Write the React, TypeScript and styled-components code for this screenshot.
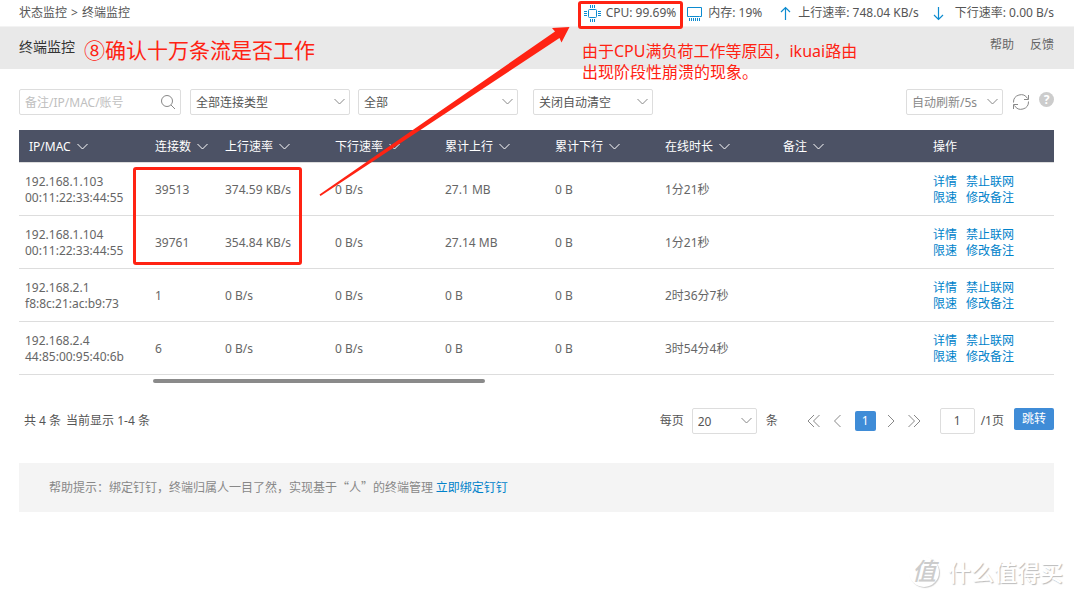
import React from 'react';
import styled, { createGlobalStyle } from 'styled-components';

const GlobalStyle = createGlobalStyle`
  *, *::before, *::after { box-sizing: border-box; }
  body {
    margin: 0;
    background: #fff;
    color: #555;
    font: 12px/16px "Noto Sans", "Noto Sans CJK SC", sans-serif;
  }
  button, input, select { font: inherit; color: inherit; margin: 0; }
`;

const Page = styled.div`
  position: relative;
  min-height: 100vh;
  overflow: hidden;
`;

const TopBar = styled.header`
  display: flex;
  justify-content: space-between;
  align-items: center;
  height: 26px;
  padding: 0 20px 0 19px;
`;

const Crumbs = styled.nav`
  display: flex;
  gap: 4px;
  a { color: inherit; text-decoration: none; }
`;

const Stats = styled.div`
  display: flex;
  gap: 11px;
`;

const Stat = styled.span`
  display: flex;
  align-items: center;
  gap: 5px;
  white-space: nowrap;
`;

const TitleBar = styled.div`
  display: flex;
  justify-content: space-between;
  height: 43px;
  padding: 10px 20px 0 19px;
  background: #e9e9e9;
  border-top: 1px solid #f3f3f3;
`;

const Title = styled.h1`
  margin: 0;
  font-size: 14px;
  line-height: 20px;
  font-weight: 400;
  color: #333;
`;

const TitleLinks = styled.nav`
  display: flex;
  gap: 16px;
  a { color: #666; text-decoration: none; }
`;

const Content = styled.main`
  padding: 20px 20px 0 19px;
`;

const Toolbar = styled.div`
  display: flex;
  align-items: center;
  margin-bottom: 15px;
`;

const Spacer = styled.div`
  flex: 1;
`;

const Field = styled.div<{ $w: number; $gap?: number }>`
  position: relative;
  width: ${p => p.$w}px;
  height: 26px;
  margin-right: ${p => p.$gap ?? 0}px;
  color: #555;
  svg { position: absolute; right: 4px; top: 8px; pointer-events: none; }
`;

const Search = styled(Field)`
  svg { right: 5px; top: 5px; }
`;

const SearchInput = styled.input`
  width: 100%;
  height: 26px;
  padding: 0 26px 0 5px;
  border: 1px solid #ddd;
  border-radius: 2px;
  outline: none;
  &::placeholder { color: #c0c0c0; }
`;

const SelectBox = styled.select<{ $muted?: boolean }>`
  appearance: none;
  width: 100%;
  height: 26px;
  padding: 2px 20px 0 5px;
  border: 1px solid #ddd;
  border-radius: 2px;
  background: #fff;
  color: ${p => (p.$muted ? '#888' : '#555')};
`;

const IconButton = styled.button`
  display: flex;
  padding: 0;
  border: 0;
  background: none;
  color: #888;
  cursor: pointer;
`;

const HelpButton = styled(IconButton)`
  justify-content: center;
  align-self: flex-start;
  width: 15px;
  height: 15px;
  margin: 3px 0 0 9px;
  border-radius: 8px;
  background: #ccc;
  color: #fff;
  font-weight: 700;
  line-height: 15px;
`;

const Table = styled.table`
  width: 100%;
  table-layout: fixed;
  border-collapse: collapse;
`;

const HeadCell = styled.th`
  height: 32px;
  padding: 2px 0 0 10px;
  background: #4c5265;
  border-bottom: 1px solid #ddd;
  color: #fff;
  font-weight: 400;
  text-align: left;
  white-space: nowrap;
  svg { margin-left: 5px; }
`;

const Cell = styled.td`
  height: 53px;
  padding: 2px 0 0 10px;
  border-bottom: 1px solid #ddd;
  color: #666;
  white-space: nowrap;
  &:first-child { padding-left: 6px; }
`;

const Actions = styled.div`
  display: grid;
  grid-template-columns: max-content max-content;
  column-gap: 9px;
`;

const Link = styled.a`
  color: #0082ca;
  text-decoration: none;
`;

const ScrollTrack = styled.div`
  padding: 4px 0 0 134px;
`;

const ScrollThumb = styled.div`
  width: 332px;
  height: 4px;
  border-radius: 2px;
  background: #8a8a8a;
`;

const Footer = styled.div`
  display: flex;
  align-items: center;
  margin: 25px 0 29px;
  padding-left: 5px;
`;

const Summary = styled.p`
  display: flex;
  gap: 5px;
  margin: 0;
`;

const Pager = styled.nav`
  display: flex;
  align-items: center;
  margin: 0 19px 0 29px;
  gap: 11px;
`;

const CurrentPage = styled.button`
  width: 21px;
  height: 20px;
  padding: 0;
  border: 0;
  border-radius: 2px;
  background: #3f8cd7;
  color: #fff;
`;

const PageInput = styled.input`
  width: 35px;
  height: 26px;
  margin-right: 6px;
  padding: 0;
  border: 1px solid #ddd;
  border-radius: 2px;
  text-align: center;
`;

const JumpButton = styled.button`
  align-self: flex-start;
  width: 40px;
  height: 22px;
  margin-left: 10px;
  padding: 0;
  border: 0;
  border-radius: 2px;
  background: #3f8cd7;
  color: #fff;
`;

const Label = styled.label`
  margin-right: 8px;
`;

const Tip = styled.p`
  margin: 0;
  padding: 16px 30px 17px;
  background: #f4f4f4;
  color: #888;
  font-family: "Noto Sans CJK SC", sans-serif;
`;

const Marks = styled.div`
  position: absolute;
  inset: 0;
  pointer-events: none;
  color: #ff2313;
`;

const MarkBox = styled.div<{ $x: number; $y: number; $w: number; $h: number }>`
  position: absolute;
  left: ${p => p.$x}px;
  top: ${p => p.$y}px;
  width: ${p => p.$w}px;
  height: ${p => p.$h}px;
  border: 3px solid #ff2313;
  border-radius: 3px;
`;

const MarkText = styled.p<{ $x: number; $y: number; $size: number; $line: number }>`
  position: absolute;
  left: ${p => p.$x}px;
  top: ${p => p.$y}px;
  margin: 0;
  font-size: ${p => p.$size}px;
  line-height: ${p => p.$line}px;
  white-space: nowrap;
`;

const Arrow = styled.svg`
  position: absolute;
  left: 0;
  top: 0;
`;

const Watermark = styled.div`
  position: absolute;
  right: 11px;
  bottom: 10px;
  display: flex;
  align-items: center;
  gap: 9px;
  color: #fff;
  font-size: 23px;
  font-weight: 500;
  line-height: 34px;
  text-shadow: 1px 1px 1px #bbb;
`;

const Seal = styled.span`
  flex: none;
  width: 30px;
  height: 30px;
  border-radius: 15px;
  box-shadow: 1px 1px 1px #ccc;
  color: #ccc;
  font-size: 24px;
  font-style: italic;
  font-weight: 500;
  line-height: 27px;
  text-align: center;
  text-shadow: none;
`;

const Chevron = ({ color = '#888' }: { color?: string }) => (
  <svg width="13" height="9" viewBox="0 0 13 9" fill="none" stroke={color}>
    <path d="M1.5 2l5 5 5-5" />
  </svg>
);

const PagerIcon = ({ d, w }: { d: string; w: number }) => (
  <svg width={w} height="14" viewBox={`0 0 ${w} 14`} fill="none" stroke="#888">
    <path d={d} />
  </svg>
);

const Select = ({ w, gap, label, value, muted }: {
  w: number; gap?: number; label: string; value: string; muted?: boolean;
}) => (
  <Field $w={w} $gap={gap}>
    <SelectBox aria-label={label} $muted={muted}>
      <option>{value}</option>
    </SelectBox>
    <Chevron />
  </Field>
);

const columns = [
  { name: 'IP/MAC', width: 126 },
  { name: '连接数', width: 70 },
  { name: '上行速率', width: 110 },
  { name: '下行速率', width: 110 },
  { name: '累计上行', width: 110 },
  { name: '累计下行', width: 110 },
  { name: '在线时长', width: 118 },
  { name: '备注', width: 150 },
];

const rows = [
  ['192.168.1.103', '00:11:22:33:44:55', '39513', '374.59 KB/s', '0 B/s', '27.1 MB', '0 B', '1分21秒'],
  ['192.168.1.104', '00:11:22:33:44:55', '39761', '354.84 KB/s', '0 B/s', '27.14 MB', '0 B', '1分21秒'],
  ['192.168.2.1', 'f8:8c:21:ac:b9:73', '1', '0 B/s', '0 B/s', '0 B', '0 B', '2时36分7秒'],
  ['192.168.2.4', '44:85:00:95:40:6b', '6', '0 B/s', '0 B/s', '0 B', '0 B', '3时54分4秒'],
];

export default function App() {
  return (
    <Page>
      <GlobalStyle />
      <TopBar>
        <Crumbs><a href="#status">状态监控</a><span>&gt;</span><a href="#terminal">终端监控</a></Crumbs>
        <Stats>
          <Stat>
            <svg width="17" height="17" viewBox="0 0 17 17" fill="none" stroke="#0c8bd0">
              <rect x="4.5" y="4.5" width="8" height="8" rx="1" />
              <path d="M6.5 0v3M8.5 0v3M10.5 0v3M6.5 14v3M8.5 14v3M10.5 14v3M0 6.500h3M0 8.500h3M0 10.500h3M14 6.500h3M14 8.500h3M14 10.500h3" />
            </svg>
            CPU: 99.69%
          </Stat>
          <Stat>
            <svg width="16" height="15" viewBox="0 0 16 15" fill="none" stroke="#0c8bd0">
              <path d="M2.500 10.500H.5v-9h14v9h-2M2.500 10.500h10M2.500 12v3M4.500 12v3M6.500 12v3M8.500 12v3M10.500 12v3M12.500 12v3" />
            </svg>
            内存: 19%
          </Stat>
          <Stat>
            <svg width="20" height="15" viewBox="0 0 20 15" fill="none" stroke="#0c8bd0" strokeWidth="1.2">
              <path d="M12.500 14V1.500M8 6l4.500-4.500L17 6" />
            </svg>
            上行速率: 748.04 KB/s
          </Stat>
          <Stat>
            <svg width="20" height="15" viewBox="0 0 20 15" fill="none" stroke="#0c8bd0" strokeWidth="1.2">
              <path d="M8.500 1v12.500M4 9l4.500 4.500L13 9" />
            </svg>
            下行速率: 0.00 B/s
          </Stat>
        </Stats>
      </TopBar>
      <TitleBar>
        <Title>终端监控</Title>
        <TitleLinks><a href="#help">帮助</a><a href="#feedback">反馈</a></TitleLinks>
      </TitleBar>
      <Content>
        <Toolbar>
          <Search $w={162} $gap={9}>
            <SearchInput aria-label="搜索" placeholder="备注/IP/MAC/账号" />
            <svg width="16" height="16" viewBox="0 0 16 16" fill="none" stroke="#888">
              <circle cx="7" cy="7" r="5.500" /><path d="M11 11l4 4" />
            </svg>
          </Search>
          <Select w={160} gap={8} label="连接类型" value="全部连接类型" />
          <Select w={160} gap={15} label="范围" value="全部" />
          <Select w={120} label="自动清空" value="关闭自动清空" />
          <Spacer />
          <Select w={97} gap={9} label="自动刷新" value="自动刷新/5s" muted />
          <IconButton aria-label="刷新">
            <svg width="18" height="18" viewBox="0 0 18 18" fill="none" stroke="#888">
              <path d="M1.500 9.500A7.500 7.500 0 0 1 15.500 5.500M16.500 8.500A7.500 7.500 0 0 1 2.500 12.500M16.500 2v4.500h-4.500M1.500 16v-4.500H6" />
            </svg>
          </IconButton>
          <HelpButton aria-label="帮助">?</HelpButton>
        </Toolbar>
        <Table>
          <colgroup>
            {columns.map(c => <col key={c.name} width={c.width} />)}
            <col />
          </colgroup>
          <thead>
            <tr>
              {columns.map(c => <HeadCell key={c.name}>{c.name}<Chevron color="#fff" /></HeadCell>)}
              <HeadCell>操作</HeadCell>
            </tr>
          </thead>
          <tbody>
            {rows.map(([ip, mac, ...rest]) => (
              <tr key={ip}>
                <Cell>{ip}<br />{mac}</Cell>
                {rest.map((v, i) => <Cell key={i}>{v}</Cell>)}
                <Cell />
                <Cell>
                  <Actions>
                    <Link href="#detail">详情</Link><Link href="#block">禁止联网</Link>
                    <Link href="#limit">限速</Link><Link href="#remark">修改备注</Link>
                  </Actions>
                </Cell>
              </tr>
            ))}
          </tbody>
        </Table>
        <ScrollTrack><ScrollThumb /></ScrollTrack>
        <Footer>
          <Summary><span>共 4 条</span><span>当前显示 1-4 条</span></Summary>
          <Spacer />
          <Label htmlFor="size">每页</Label>
          <Field $w={65} $gap={9}>
            <SelectBox id="size"><option>20</option></SelectBox>
            <Chevron />
          </Field>
          <span>条</span>
          <Pager>
            <IconButton aria-label="首页"><PagerIcon w={13} d="M7 1L1 7l6 6M12.500 1l-6 6 6 6" /></IconButton>
            <IconButton aria-label="上一页"><PagerIcon w={13} d="M9.500 1l-6 6 6 6" /></IconButton>
            <CurrentPage>1</CurrentPage>
            <IconButton aria-label="下一页"><PagerIcon w={10} d="M1 1l6 6-6 6" /></IconButton>
            <IconButton aria-label="末页"><PagerIcon w={13} d="M.5 1l6 6-6 6M6 1l6 6-6 6" /></IconButton>
          </Pager>
          <PageInput aria-label="页码" defaultValue="1" />
          <span>/1页</span>
          <JumpButton>跳转</JumpButton>
        </Footer>
        <Tip>帮助提示：绑定钉钉，终端归属人一目了然，实现基于“人”的终端管理 <Link href="#ding">立即绑定钉钉</Link></Tip>
      </Content>
      <Marks>
        <MarkBox $x={578} $y={1} $w={105} $h={28} />
        <MarkBox $x={133} $y={167} $w={169} $h={98} />
        <Arrow width="580" height="200" viewBox="0 0 580 200" fill="#ff2313">
          <path d="M319.500 194.500L555 31.500l-3-3.500 17.500-1-8 15.500-2-4.500L320.500 196z" />
        </Arrow>
        <MarkText $x={84} $y={36} $size={21} $line={28}>⑧确认十万条流是否工作</MarkText>
        <MarkText $x={582} $y={41} $size={16} $line={21}>由于CPU满负荷工作等原因，ikuai路由<br />出现阶段性崩溃的现象。</MarkText>
      </Marks>
      <Watermark><Seal>值</Seal>什么值得买</Watermark>
    </Page>
  );
}
